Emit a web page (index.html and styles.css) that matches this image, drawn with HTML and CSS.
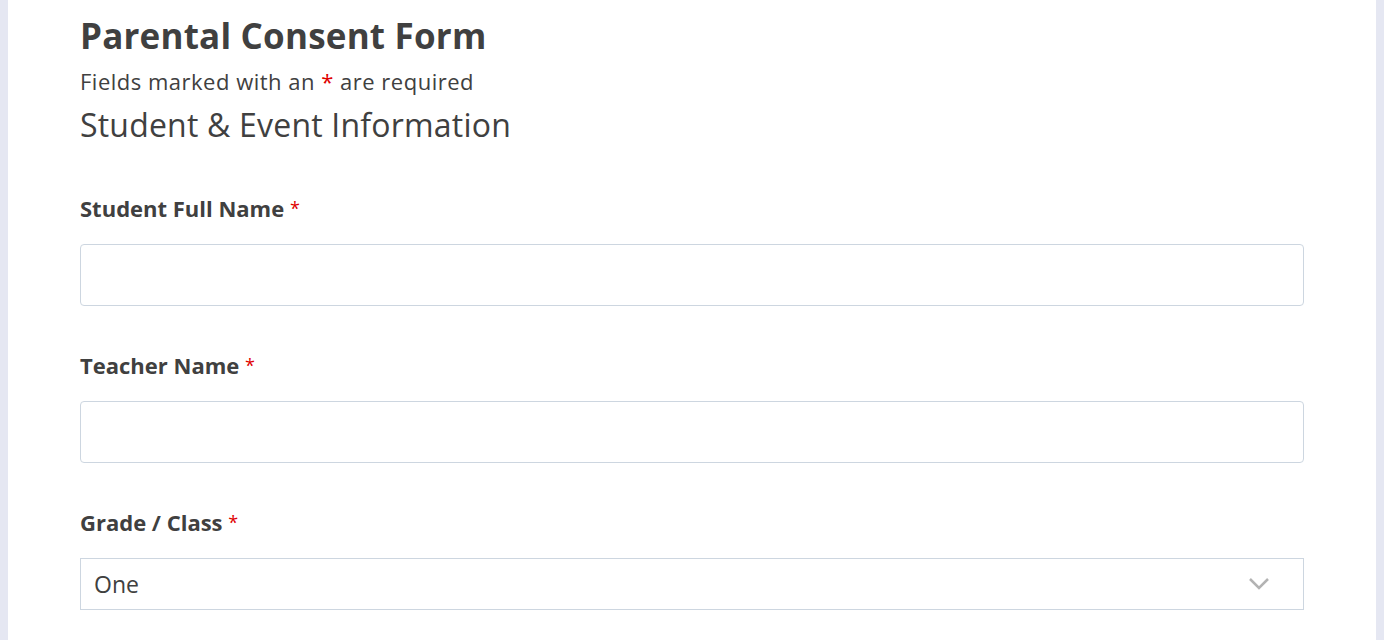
FILE: index.html
```html
<!DOCTYPE html>
<html lang="en">
<head>
  <meta charset="UTF-8" />
  <meta name="viewport" content="width=device-width, initial-scale=1.0"/>
  <title>Parental Consent Form</title>
  <link rel="stylesheet" href="styles.css">
</head>
<body>
  <div class="form-card">
    <h1>Parental Consent Form</h1>
    <p class="note">Fields marked with an <span class="req">*</span> are required</p>
    <h2>Student &amp; Event Information</h2>

    <div class="field">
      <label for="student">Student Full Name <span class="req">*</span></label>
      <input type="text" id="student"/>
    </div>

    <div class="field">
      <label for="teacher">Teacher Name <span class="req">*</span></label>
      <input type="text" id="teacher"/>
    </div>

    <div class="field">
      <label for="grade">Grade / Class <span class="req">*</span></label>
      <div class="select-wrap">
        <select id="grade">
          <option>One</option>
          <option>Two</option>
          <option>Three</option>
          <option>Four</option>
          <option>Five</option>
        </select>
        <svg class="chevron" width="22" height="14" viewBox="0 0 22 14">
          <path d="M2 2 L11 11 L20 2" fill="none" stroke="#b3b3b3" stroke-width="2.5"/>
        </svg>
      </div>
    </div>
  </div>
</body>
</html>
```

FILE: styles.css
```css
body {
  margin: 0;
  background-color: #e5e7f2;
  font-family: "Open Sans", Lato, sans-serif;
  color: #404040;
}
.form-card {
  margin: 0 8px;
  min-height: 640px;
  background-color: #fff;
  padding: 14px 72px 40px;
}
h1 {
  margin: 0;
  font-size: 35px;
  line-height: 44px;
  font-weight: 700;
  letter-spacing: 0.2px;
}
.note {
  margin: 8px 0 0;
  font-size: 22px;
  line-height: 30px;
  letter-spacing: 0.5px;
}
h2 {
  margin: 9px 0 0;
  font-size: 32px;
  line-height: 40px;
  font-weight: 400;
  letter-spacing: 0.2px;
}
.req {
  color: #e00000;
}
.field {
  margin-top: 48px;
}
.field + .field {
  margin-top: 44px;
}
label {
  display: block;
  font-size: 22px;
  line-height: 30px;
  font-weight: 700;
  margin-bottom: 21px;
}
label .req {
  font-weight: 400;
  font-size: 18px;
  vertical-align: 2px;
}
input[type="text"] {
  display: block;
  box-sizing: border-box;
  width: 100%;
  height: 62px;
  border: 1px solid #cdd6e0;
  border-radius: 4px;
  padding: 0 14px;
  font-family: inherit;
  font-size: 22px;
}
.select-wrap {
  position: relative;
}
select {
  display: block;
  box-sizing: border-box;
  width: 100%;
  height: 52px;
  border: 1px solid #cdd6e0;
  border-radius: 0;
  background: #fff;
  appearance: none;
  padding: 0 13px;
  font-family: inherit;
  font-size: 23px;
  color: #404040;
}
.chevron {
  position: absolute;
  right: 34px;
  top: 19px;
}
```
